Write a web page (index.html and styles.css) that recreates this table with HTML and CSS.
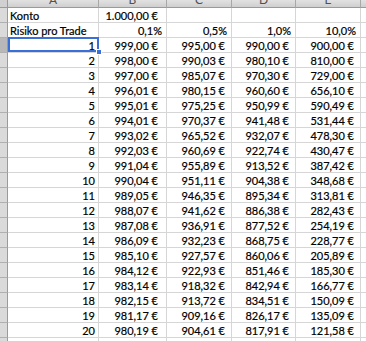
FILE: index.html
```html
<!DOCTYPE html>
<html lang="de">
<head>
<meta charset="utf-8">
<title>Tabelle</title>
<link rel="stylesheet" href="styles.css">
</head>
<body>
<div class="sheet">
  <div class="corner"></div>
  <div class="colhdr"><span>A</span></div>
  <div class="colhdr"><span>B</span></div>
  <div class="colhdr"><span>C</span></div>
  <div class="colhdr"><span>D</span></div>
  <div class="colhdr"><span>E</span></div>
  <div class="colhdr last"></div>

  <div class="rowhdr"></div><div class="c l">Konto</div><div class="c b">1.000,00 €</div><div class="c"></div><div class="c"></div><div class="c"></div><div class="c f"></div>
  <div class="rowhdr"></div><div class="c l">Risiko pro Trade</div><div class="c p">0,1%</div><div class="c p">0,5%</div><div class="c p">1,0%</div><div class="c p">10,0%</div><div class="c f"></div>

  <div class="rowhdr sel"></div><div class="c n active">1<i class="handle"></i></div><div class="c b">999,00 €</div><div class="c m">995,00 €</div><div class="c m">990,00 €</div><div class="c m">900,00 €</div><div class="c f"></div>
  <div class="rowhdr"></div><div class="c n">2</div><div class="c b">998,00 €</div><div class="c m">990,03 €</div><div class="c m">980,10 €</div><div class="c m">810,00 €</div><div class="c f"></div>
  <div class="rowhdr"></div><div class="c n">3</div><div class="c b">997,00 €</div><div class="c m">985,07 €</div><div class="c m">970,30 €</div><div class="c m">729,00 €</div><div class="c f"></div>
  <div class="rowhdr"></div><div class="c n">4</div><div class="c b">996,01 €</div><div class="c m">980,15 €</div><div class="c m">960,60 €</div><div class="c m">656,10 €</div><div class="c f"></div>
  <div class="rowhdr"></div><div class="c n">5</div><div class="c b">995,01 €</div><div class="c m">975,25 €</div><div class="c m">950,99 €</div><div class="c m">590,49 €</div><div class="c f"></div>
  <div class="rowhdr"></div><div class="c n">6</div><div class="c b">994,01 €</div><div class="c m">970,37 €</div><div class="c m">941,48 €</div><div class="c m">531,44 €</div><div class="c f"></div>
  <div class="rowhdr"></div><div class="c n">7</div><div class="c b">993,02 €</div><div class="c m">965,52 €</div><div class="c m">932,07 €</div><div class="c m">478,30 €</div><div class="c f"></div>
  <div class="rowhdr"></div><div class="c n">8</div><div class="c b">992,03 €</div><div class="c m">960,69 €</div><div class="c m">922,74 €</div><div class="c m">430,47 €</div><div class="c f"></div>
  <div class="rowhdr"></div><div class="c n">9</div><div class="c b">991,04 €</div><div class="c m">955,89 €</div><div class="c m">913,52 €</div><div class="c m">387,42 €</div><div class="c f"></div>
  <div class="rowhdr"></div><div class="c n">10</div><div class="c b">990,04 €</div><div class="c m">951,11 €</div><div class="c m">904,38 €</div><div class="c m">348,68 €</div><div class="c f"></div>
  <div class="rowhdr"></div><div class="c n">11</div><div class="c b">989,05 €</div><div class="c m">946,35 €</div><div class="c m">895,34 €</div><div class="c m">313,81 €</div><div class="c f"></div>
  <div class="rowhdr"></div><div class="c n">12</div><div class="c b">988,07 €</div><div class="c m">941,62 €</div><div class="c m">886,38 €</div><div class="c m">282,43 €</div><div class="c f"></div>
  <div class="rowhdr"></div><div class="c n">13</div><div class="c b">987,08 €</div><div class="c m">936,91 €</div><div class="c m">877,52 €</div><div class="c m">254,19 €</div><div class="c f"></div>
  <div class="rowhdr"></div><div class="c n">14</div><div class="c b">986,09 €</div><div class="c m">932,23 €</div><div class="c m">868,75 €</div><div class="c m">228,77 €</div><div class="c f"></div>
  <div class="rowhdr"></div><div class="c n">15</div><div class="c b">985,10 €</div><div class="c m">927,57 €</div><div class="c m">860,06 €</div><div class="c m">205,89 €</div><div class="c f"></div>
  <div class="rowhdr"></div><div class="c n">16</div><div class="c b">984,12 €</div><div class="c m">922,93 €</div><div class="c m">851,46 €</div><div class="c m">185,30 €</div><div class="c f"></div>
  <div class="rowhdr"></div><div class="c n">17</div><div class="c b">983,14 €</div><div class="c m">918,32 €</div><div class="c m">842,94 €</div><div class="c m">166,77 €</div><div class="c f"></div>
  <div class="rowhdr"></div><div class="c n">18</div><div class="c b">982,15 €</div><div class="c m">913,72 €</div><div class="c m">834,51 €</div><div class="c m">150,09 €</div><div class="c f"></div>
  <div class="rowhdr"></div><div class="c n">19</div><div class="c b">981,17 €</div><div class="c m">909,16 €</div><div class="c m">826,17 €</div><div class="c m">135,09 €</div><div class="c f"></div>
  <div class="rowhdr"></div><div class="c n">20</div><div class="c b">980,19 €</div><div class="c m">904,61 €</div><div class="c m">817,91 €</div><div class="c m">121,58 €</div><div class="c f"></div>
  <div class="rowhdr"></div><div class="c"></div><div class="c"></div><div class="c"></div><div class="c"></div><div class="c"></div><div class="c f"></div>
</div>
</body>
</html>
```
FILE: styles.css
```css
html, body {
  margin: 0;
  padding: 0;
  background: #ffffff;
  overflow: hidden;
}

.sheet {
  display: grid;
  grid-template-columns: 8px 91px 68px 65px 64px 65px 1fr;
  grid-template-rows: 8px;
  grid-auto-rows: 15px;
  width: 366px;
  font-family: Lato, "Liberation Sans", sans-serif;
  font-size: 11px;
  color: #000000;
  -webkit-text-stroke: 0.2px #000000;
}

.corner {
  background: #d0d0d0;
  border-right: 1px solid #9a9a9a;
  border-bottom: 1px solid #9a9a9a;
}

.colhdr {
  background: linear-gradient(#e2e2e2, #cfcfcf);
  border-right: 1px solid #a8a8a8;
  border-bottom: 1px solid #9a9a9a;
  overflow: hidden;
  text-align: center;
  color: #505050;
  font-size: 12px;
  -webkit-text-stroke: 0;
}

.colhdr span {
  display: block;
  line-height: 12px;
  margin-top: -6px;
}

.colhdr.last {
  border-right: none;
}

.rowhdr {
  background: #dadada;
  border-right: 1px solid #9a9a9a;
  border-bottom: 1px solid #b0b0b0;
}

.rowhdr.sel {
  background: #b8b8b8;
}

.c {
  box-sizing: border-box;
  border-right: 1px solid #d6d6d6;
  border-bottom: 1px solid #d6d6d6;
  line-height: 14px;
  padding-top: 1px;
  overflow: hidden;
  white-space: nowrap;
  position: relative;
}

.c.f {
  border-right: none;
}

.l {
  padding-left: 2px;
}

.n {
  text-align: right;
  padding-right: 3px;
}

.b {
  text-align: right;
  padding-right: 8px;
}

.m {
  text-align: right;
  padding-right: 6px;
}

.p {
  text-align: right;
  padding-right: 4px;
}

.active {
  overflow: visible;
  z-index: 2;
}

.active::before {
  content: "";
  position: absolute;
  left: 0;
  top: -1px;
  right: -1px;
  bottom: 0;
  border: 2px solid #3a6fd8;
  pointer-events: none;
}

.handle {
  position: absolute;
  right: -4px;
  bottom: -3px;
  width: 4px;
  height: 4px;
  background: #3a6fd8;
  border: 1px solid #ffffff;
  z-index: 3;
}
```
